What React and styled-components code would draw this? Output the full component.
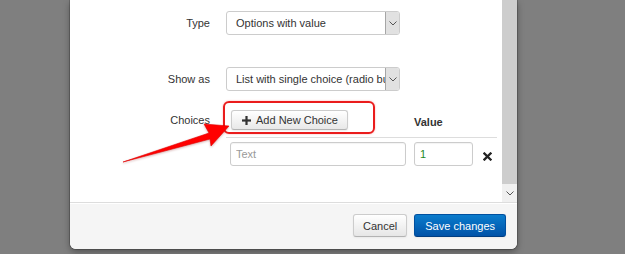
import React from "react"
import styled, { createGlobalStyle } from "styled-components"

const GlobalStyle = createGlobalStyle`
    html, body {
        margin: 0;
        padding: 0;
        background: #7f7f7f;
        font-family: "Liberation Sans", Arial, sans-serif;
    }
`

const Chevron = () => (
    <svg width="8" height="5" viewBox="0 0 8 5">
        <path d="M0.5 0.5 L4 4 L7.5 0.5" fill="none" stroke="#555" strokeWidth="1" />
    </svg>
)

const PlusIcon = () => (
    <svg width="9" height="9" viewBox="0 0 9 9">
        <rect x="3.4" y="0" width="2.2" height="9" fill="#333" />
        <rect x="0" y="3.4" width="9" height="2.2" fill="#333" />
    </svg>
)

const RemoveIcon = () => (
    <svg width="9" height="9" viewBox="0 0 9 9">
        <path d="M1.5 1.5 L7.5 7.5 M7.5 1.5 L1.5 7.5" stroke="#222" strokeWidth="2.3" strokeLinecap="square" />
    </svg>
)

const App = () => {
    return (
        <Page>
            <GlobalStyle />
            <Modal>
                <ModalBody>
                    <FormArea>
                        <FieldRow $gap={32}>
                            <Label>Type</Label>
                            <Select>
                                <SelectText>Options with value</SelectText>
                                <SelectArrow><Chevron /></SelectArrow>
                            </Select>
                        </FieldRow>
                        <FieldRow $gap={15}>
                            <Label>Show as</Label>
                            <Select>
                                <SelectText>List with single choice (radio buttons)</SelectText>
                                <SelectArrow><Chevron /></SelectArrow>
                            </Select>
                        </FieldRow>
                        <FieldRow $align="start">
                            <Label $offset={2}>Choices</Label>
                            <ChoicesTable>
                                <HeadRow>
                                    <Cell>
                                        <AddButton><PlusIcon /> Add New Choice</AddButton>
                                    </Cell>
                                    <HeadCell>Value</HeadCell>
                                    <Cell />
                                </HeadRow>
                                <BodyRow>
                                    <Cell>
                                        <TextInput placeholder="Text" $width={176} readOnly />
                                    </Cell>
                                    <Cell>
                                        <TextInput value="1" $width={59} $success readOnly />
                                    </Cell>
                                    <RemoveCell><RemoveIcon /></RemoveCell>
                                </BodyRow>
                            </ChoicesTable>
                        </FieldRow>
                    </FormArea>
                    <Scrollbar>
                        <Thumb />
                        <ScrollButton><Chevron /></ScrollButton>
                    </Scrollbar>
                </ModalBody>
                <Footer>
                    <Button>Cancel</Button>
                    <PrimaryButton>Save changes</PrimaryButton>
                </Footer>
            </Modal>

            <Highlight />
            <Arrow width="625" height="254" viewBox="0 0 625 254">
                <polygon
                    points="123,162 209,133 204,124 229,126 211,146 210,139"
                    fill="#ff0000"
                    stroke="#e00000"
                    strokeWidth="0.6"
                    strokeLinejoin="round"
                />
            </Arrow>
        </Page>
    )
}

export default App

const Page = styled.div`
    position: relative;
    width: 625px;
    height: 254px;
    overflow: hidden;
`

const Modal = styled.div`
    margin-left: 70px;
    width: 447px;
    background: #fff;
    border-radius: 0 0 6px 6px;
    box-shadow: 0 0 0 1px rgba(0, 0, 0, 0.18), 0 3px 7px rgba(0, 0, 0, 0.35);
    overflow: hidden;
`

const ModalBody = styled.div`
    display: flex;
    height: 202px;
`

const FormArea = styled.div`
    flex: 1;
    padding-top: 11px;
`

const FieldRow = styled.div`
    display: grid;
    grid-template-columns: 140px auto;
    column-gap: 16px;
    align-items: ${props => props.$align || "center"};
    margin-bottom: ${props => props.$gap || 0}px;
`

const Label = styled.div`
    text-align: right;
    font-size: 11px;
    line-height: 24px;
    color: #333;
    padding-top: ${props => props.$offset || 0}px;
`

const Select = styled.div`
    display: flex;
    width: 174px;
    height: 24px;
    box-sizing: border-box;
    border: 1px solid #ccc;
    border-radius: 3px;
    overflow: hidden;
`

const SelectText = styled.div`
    flex: 1;
    padding-left: 9px;
    font-size: 11px;
    line-height: 22px;
    color: #333;
    white-space: nowrap;
    overflow: hidden;
`

const SelectArrow = styled.div`
    width: 15px;
    flex: none;
    margin: -1px -1px -1px 0;
    box-sizing: border-box;
    background: #e1e1e1;
    border: 1px solid #a6a6a6;
    display: flex;
    align-items: center;
    justify-content: center;
`

const ChoicesTable = styled.div`
    width: 271px;
`

const HeadRow = styled.div`
    display: grid;
    grid-template-columns: 184px 68px 19px;
    align-items: center;
    padding: 4px 0 7px;
    border-bottom: 1px solid #ddd;
`

const BodyRow = styled.div`
    display: grid;
    grid-template-columns: 184px 68px 19px;
    align-items: start;
    padding-top: 4px;
`

const Cell = styled.div`
    padding-left: 4px;
`

const HeadCell = styled(Cell)`
    font-size: 11px;
    font-weight: bold;
    color: #333;
    padding-top: 3px;
`

const RemoveCell = styled(Cell)`
    padding-top: 5px;
    padding-left: 5px;
`

const AddButton = styled.div`
    display: inline-flex;
    align-items: center;
    gap: 5px;
    height: 20px;
    box-sizing: border-box;
    padding: 0 9px 0 10px;
    margin-left: 1px;
    font-size: 11px;
    white-space: nowrap;
    color: #333;
    background: linear-gradient(#ffffff, #e8e8e8);
    border: 1px solid #ccc;
    border-bottom-color: #b3b3b3;
    border-radius: 3px;
    box-shadow: inset 0 1px 0 rgba(255, 255, 255, 0.2), 0 1px 2px rgba(0, 0, 0, 0.08);
`

const TextInput = styled.input`
    display: block;
    width: ${props => props.$width}px;
    height: 24px;
    box-sizing: border-box;
    border: 1px solid #ccc;
    border-radius: 3px;
    padding: 0 5px;
    font-family: "Liberation Sans", Arial, sans-serif;
    font-size: 11px;
    color: ${props => (props.$success ? "#1f8a1f" : "#555")};
    -webkit-text-fill-color: ${props => (props.$success ? "#1f8a1f" : "#555")};
    box-shadow: inset 0 1px 1px rgba(0, 0, 0, 0.05);
    outline: none;

    &::placeholder {
        color: #999;
        -webkit-text-fill-color: #999;
    }
`

const Scrollbar = styled.div`
    width: 15px;
    display: flex;
    flex-direction: column;
    background: #f0f0f0;
`

const Thumb = styled.div`
    flex: 1;
    background: #cdcdcd;
`

const ScrollButton = styled.div`
    height: 18px;
    display: flex;
    align-items: center;
    justify-content: center;
`

const Footer = styled.div`
    display: flex;
    justify-content: flex-end;
    gap: 7px;
    padding: 11px 11px 12px;
    background: #f5f5f5;
    border-top: 1px solid #ddd;
    box-shadow: inset 0 1px 0 #fff;
`

const Button = styled.div`
    height: 23px;
    box-sizing: border-box;
    padding: 0 9px;
    display: flex;
    align-items: center;
    font-size: 11px;
    color: #333;
    background: linear-gradient(#ffffff, #e6e6e6);
    border: 1px solid #ccc;
    border-bottom-color: #b3b3b3;
    border-radius: 3px;
    box-shadow: 0 1px 2px rgba(0, 0, 0, 0.05);
`

const PrimaryButton = styled(Button)`
    padding: 0 10px;
    color: #fff;
    background: linear-gradient(#0a7ccc, #0052a8);
    border-color: #00509f #00509f #003d80;
`

const Highlight = styled.div`
    position: absolute;
    left: 223px;
    top: 101px;
    width: 152px;
    height: 33px;
    box-sizing: border-box;
    border: 2px solid #ea1c1c;
    border-radius: 6px;
    box-shadow: 0 0 2px rgba(255, 0, 0, 0.35);
    pointer-events: none;
`

const Arrow = styled.svg`
    position: absolute;
    left: 0;
    top: 0;
    pointer-events: none;
    filter: drop-shadow(0 1px 1px rgba(120, 0, 0, 0.3));
`
